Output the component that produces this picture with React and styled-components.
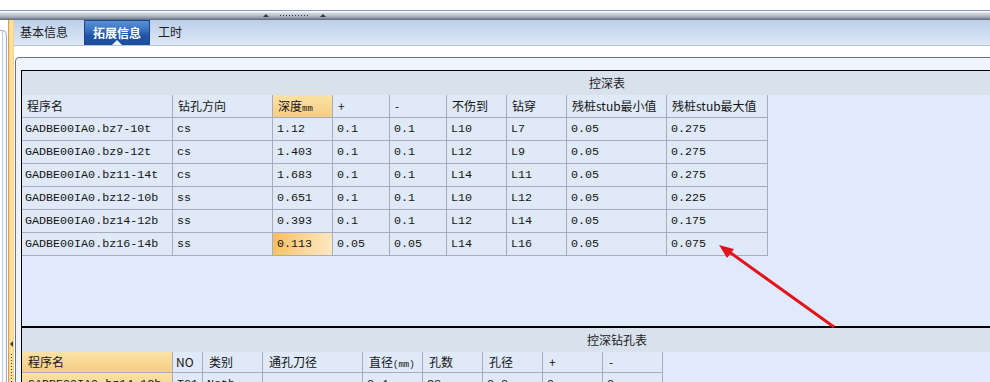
import React from 'react';
import styled, { createGlobalStyle } from 'styled-components';

const Global = createGlobalStyle`
  html, body { margin: 0; padding: 0; background: #fff; }
  body { font-family: "Noto Sans CJK SC", "Noto Sans", sans-serif; font-size: 12px; color: #111; }
`;

const CJK = `"Noto Sans CJK SC", "Noto Sans", sans-serif`;
const MONO = `"Liberation Mono", "Noto Sans CJK SC", monospace`;

const Screen = styled.div`
  position: relative;
  width: 990px;
  height: 382px;
  overflow: hidden;
  background: #fff;
  display: flex;
  flex-direction: column;
`;

const TopSpace = styled.div`
  height: 10px;
  flex: none;
`;

const Splitter = styled.div`
  height: 9px;
  flex: none;
  border-top: 1px solid #8a99b6;
  background: linear-gradient(#fafbfd 0, #fafbfd 1px, #d6dae0 2px, #b5bbc5 5px, #8c95a2 7px, #5d6775 9px);
  display: flex;
  align-items: center;
  padding-left: 263px;
`;

const GripTri = styled.span`
  width: 0;
  height: 0;
  border-left: 3px solid transparent;
  border-right: 3px solid transparent;
  border-bottom: 3px solid #2b3b55;
  margin-right: ${p => p.$mr || 0}px;
`;

const GripDots = styled.span`
  width: 30px;
  height: 1px;
  background: repeating-linear-gradient(to right, #2b3b55 0 1px, transparent 1px 3px);
  margin-right: 10px;
`;

const Body = styled.div`
  flex: 1;
  display: flex;
  min-height: 0;
`;

const LeftRail = styled.div`
  width: 8px;
  flex: none;
  display: flex;
`;

const LeftPanel = styled.div`
  width: 6px;
  margin-top: 10px;
  border: 1px solid #a3adbb;
  border-left: none;
  border-bottom: none;
  border-radius: 0 5px 0 0;
  background: linear-gradient(to right, #fff 0 2px, #c4ccd8 2px 3px, #f4f6fa 3px);
`;

const YellowBar = styled.div`
  width: 6px;
  flex: none;
  background: linear-gradient(to right, #d9a04a 0 1px, #f7d188 1px, #fde4a8 60%, #f5cf86);
  display: flex;
  flex-direction: column;
  align-items: center;
`;

const BarSpacer = styled.div`
  flex: 1;
`;

const BarArrow = styled.div`
  width: 0;
  height: 0;
  border-top: 3px solid transparent;
  border-bottom: 3px solid transparent;
  border-right: 3px solid #2b3b55;
  margin-bottom: 7px;
`;

const BarDots = styled.div`
  width: 1px;
  height: 28px;
  background: repeating-linear-gradient(#2b3b55 0 1px, transparent 1px 3px);
`;

const Main = styled.div`
  flex: 1;
  min-width: 0;
  display: flex;
  flex-direction: column;
`;

const TabStrip = styled.div`
  height: 25px;
  flex: none;
  display: flex;
  gap: 8px;
  padding-left: 6px;
  background: linear-gradient(#bccfe9, #d0def1 60%, #dce7f5);
  border-bottom: 1px solid #b6c3d3;
`;

const Tab = styled.div`
  position: relative;
  display: flex;
  align-items: center;
  padding-bottom: 1px;
  line-height: 16px;
  font-family: ${CJK};
  font-size: 12px;
  color: #1b1b1b;
  ${p => p.$active && `
    margin-left: 8px;
    padding: 0 8px 1px;
    color: #fff;
    font-weight: bold;
    border: 1px solid #1d4487;
    border-bottom: none;
    background: linear-gradient(#5a92d6 0%, #3670c0 40%, #1f56a8 60%, #1b4d9e 100%);
  `}
`;

const Notch = styled.span`
  position: absolute;
  left: 50%;
  bottom: 0;
  margin-left: -5px;
  width: 0;
  height: 0;
  border-left: 5px solid transparent;
  border-right: 5px solid transparent;
  border-bottom: 5px solid #eef4fc;
`;

const Content = styled.div`
  flex: 1;
  min-height: 0;
  padding-top: 1px;
  padding-left: 1px;
  background: #fff;
`;

const Group = styled.fieldset`
  margin: 0;
  padding: 0;
  width: 1100px;
  height: 400px;
  border: 1px solid #69717d;
  border-radius: 4px 4px 0 0;
  background: #eef4fc;
  min-width: 0;
`;

const GroupTitle = styled.legend`
  margin-left: 572px;
  padding: 0;
  width: 65px;
  height: 20px;
  box-sizing: border-box;
  border: 1px solid #69717d;
  border-radius: 3px;
  background: linear-gradient(#ffffff, #e3eaf4);
  color: #1e3a64;
  font-family: ${CJK};
  font-size: 12px;
  line-height: 18px;
  text-align: center;
`;

const GroupInner = styled.div`
  padding-top: 3px;
  padding-left: 5px;
  display: flex;
  flex-direction: column;
`;

const Panel = styled.div`
  box-sizing: border-box;
  border-left: 1px solid #000;
  border-top: ${p => p.$thick ? 2 : 1}px solid #000;
  background: #e0eafa;
  height: ${p => p.$h}px;
  flex: none;
  display: flex;
  flex-direction: column;
`;

const Caption = styled.div`
  height: 24px;
  flex: none;
  background: #d9e1ec;
  font-family: ${CJK};
  font-size: 12px;
  line-height: 24px;
  color: #1b1b1b;
  padding-left: ${p => p.$x}px;
`;

const Grid = styled.div`
  display: grid;
  grid-template-columns: ${p => p.$cols};
  width: max-content;
`;

const Cell = styled.div`
  box-sizing: border-box;
  height: ${p => p.$h || 23}px;
  border-right: 1px solid #a5aebb;
  border-bottom: 1px solid #a5aebb;
  padding-left: ${p => p.$pl ?? 4}px;
  line-height: ${p => (p.$h || 23) - 1}px;
  white-space: nowrap;
  overflow: hidden;
  font-family: ${p => p.$head ? CJK : MONO};
  font-size: ${p => p.$head ? 12 : 11.7}px;
  color: #141414;
  background: ${p => p.$hl
    ? 'linear-gradient(#fbe2a6, #f7cd84)'
    : p.$sel
      ? 'linear-gradient(100deg, #f8bd5c 0%, #fbd393 45%, #fde9c4 100%)'
      : '#dfe9f8'};
`;

const Small = styled.span`
  font-family: ${MONO};
  font-size: 9px;
`;

const Overlay = styled.svg`
  position: absolute;
  left: 0;
  top: 0;
  pointer-events: none;
`;

const cols1 = '151px 100px 60px 57px 57px 60px 60px 100px 101px';
const head1 = ['程序名', '钻孔方向', <>深度<Small>mm</Small></>, '+', '-', '不伤到', '钻穿', '残桩stub最小值', '残桩stub最大值'];
const rows1 = [
  ['GADBE00IA0.bz7-10t', 'cs', '1.12', '0.1', '0.1', 'L10', 'L7', '0.05', '0.275'],
  ['GADBE00IA0.bz9-12t', 'cs', '1.403', '0.1', '0.1', 'L12', 'L9', '0.05', '0.275'],
  ['GADBE00IA0.bz11-14t', 'cs', '1.683', '0.1', '0.1', 'L14', 'L11', '0.05', '0.275'],
  ['GADBE00IA0.bz12-10b', 'ss', '0.651', '0.1', '0.1', 'L10', 'L12', '0.05', '0.225'],
  ['GADBE00IA0.bz14-12b', 'ss', '0.393', '0.1', '0.1', 'L12', 'L14', '0.05', '0.175'],
  ['GADBE00IA0.bz16-14b', 'ss', '0.113', '0.05', '0.05', 'L14', 'L16', '0.05', '0.075'],
];

const cols2 = '151px 30px 60px 100px 60px 60px 60px 60px 60px';
const head2 = ['程序名', 'NO', '类别', '通孔刀径', <>直径<Small>(mm)</Small></>, '孔数', '孔径', '+', '-'];
const rows2 = [
  ['GADBE00IA0.bz14-12b', 'T01', 'Noth', '', '0.4', '23', '0.3', '0', '0'],
];

export default function App() {
  return (
    <Screen>
      <Global />
      <TopSpace />
      <Splitter>
        <GripTri $mr={11} />
        <GripDots />
        <GripTri />
      </Splitter>
      <Body>
        <LeftRail>
          <LeftPanel />
        </LeftRail>
        <YellowBar>
          <BarSpacer />
          <BarArrow />
          <BarDots />
        </YellowBar>
        <Main>
          <TabStrip>
            <Tab>基本信息</Tab>
            <Tab $active>拓展信息<Notch /></Tab>
            <Tab>工时</Tab>
          </TabStrip>
          <Content>
            <Group>
              <GroupTitle>拓展信息</GroupTitle>
              <GroupInner>
                <Panel $h={256}>
                  <Caption $x={567}>控深表</Caption>
                  <Grid $cols={cols1}>
                    {head1.map((h, i) => (
                      <Cell key={'h' + i} $head $hl={i === 2} $pl={5}>{h}</Cell>
                    ))}
                    {rows1.map((r, ri) => r.map((c, ci) => (
                      <Cell key={ri + '-' + ci} $sel={ri === 5 && ci === 2} $pl={ci === 0 ? 3 : 4}>{c}</Cell>
                    )))}
                  </Grid>
                </Panel>
                <Panel $thick $h={80}>
                  <Caption $x={565}>控深钻孔表</Caption>
                  <Grid $cols={cols2}>
                    {head2.map((h, i) => (
                      <Cell key={'h' + i} $head $h={21} $hl={i === 0} $pl={i === 1 ? 3 : 6}>{h}</Cell>
                    ))}
                    {rows2.map((r, ri) => r.map((c, ci) => (
                      <Cell key={ri + '-' + ci} $hl={ci === 0} $pl={ci === 0 ? 6 : 4}>{c}</Cell>
                    )))}
                  </Grid>
                </Panel>
              </GroupInner>
            </Group>
          </Content>
        </Main>
      </Body>
      <Overlay width="990" height="382" viewBox="0 0 990 382">
        <line x1="834" y1="327" x2="728" y2="251" stroke="#e3131b" strokeWidth="3" />
        <polygon points="719,245 734,249 727,258" fill="#e3131b" />
      </Overlay>
    </Screen>
  );
}
